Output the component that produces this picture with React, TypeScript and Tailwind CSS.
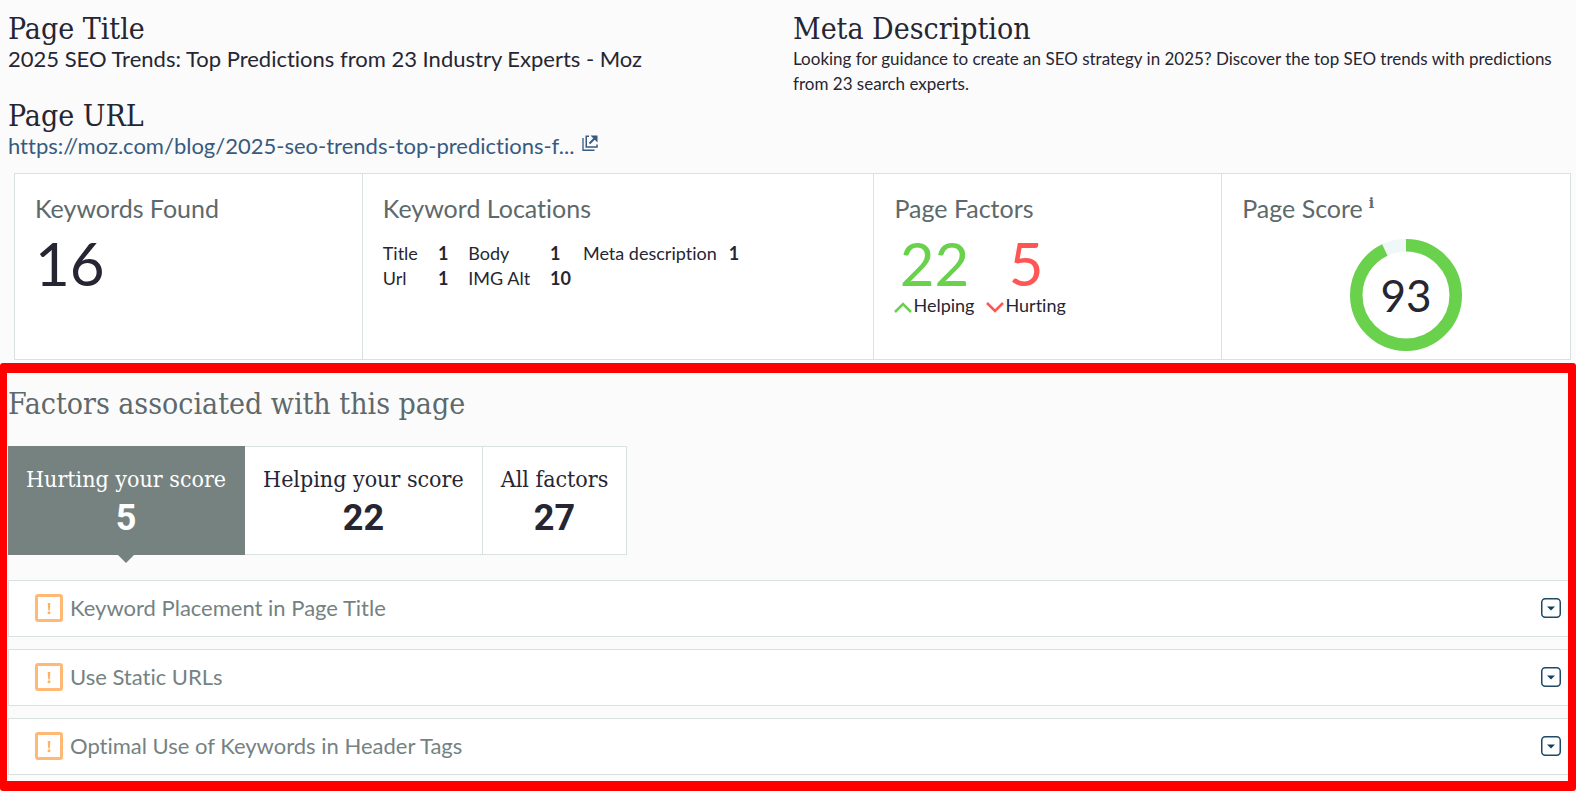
import { useState } from 'react';

const keywordLocations = [
  [
    { label: 'Title', count: 1 },
    { label: 'Body', count: 1 },
    { label: 'Meta description', count: 1 }
  ],
  [
    { label: 'Url', count: 1 },
    { label: 'IMG Alt', count: 10 }
  ]
];

const tabs = [
  { id: 'hurting', label: 'Hurting your score', count: 5 },
  { id: 'helping', label: 'Helping your score', count: 22 },
  { id: 'all', label: 'All factors', count: 27 }
];

const factors = [
  'Keyword Placement in Page Title',
  'Use Static URLs',
  'Optimal Use of Keywords in Header Tags'
];

function ExternalLinkIcon() {
  return (
    <svg width="16" height="16" viewBox="0 0 16 16" className="mb-1.5" fill="none" stroke="currentColor" aria-hidden="true">
      <path d="M1 3V15.250h11.500" strokeWidth="1.300" />
      <path d="M7 1.250H4.250V12H15V9.500" strokeWidth="1.500" />
      <path d="M7.500 8.500L13 3" strokeWidth="2" />
      <path d="M8.500 .5H15.500V7.500Z" fill="currentColor" stroke="none" />
    </svg>
  );
}

function Chevron({ up = false }: { up?: boolean }) {
  return (
    <svg
      width="18"
      height="12"
      viewBox="0 0 18 12"
      fill="none"
      stroke="currentColor"
      strokeWidth="2.500"
      className={up ? 'mt-1 mr-px text-[#69d14b]' : 'mt-1 mr-px text-[#ff5653]'}
      aria-hidden="true"
    >
      <path d={up ? 'M1 11L9 3L17 11' : 'M1 2L9 10L17 2'} />
    </svg>
  );
}

function WarningIcon() {
  return (
    <svg width="28" height="28" viewBox="0 0 28 28" className="shrink-0" aria-hidden="true">
      <rect x="1.500" y="1.500" width="25" height="25" rx="1.500" fill="none" stroke="#ffb975" strokeWidth="3" />
      <path d="M12.700 9h2.600l-.5 7.500h-1.600z" fill="#ffb160" />
      <circle cx="14" cy="18.700" r="1.500" fill="#ffb160" />
    </svg>
  );
}

function ToggleIcon() {
  return (
    <svg width="20" height="20" viewBox="0 0 20 20" className="block" aria-hidden="true">
      <rect x=".75" y=".75" width="18.500" height="18.500" rx="3.500" fill="none" stroke="#1f4a66" strokeWidth="1.500" />
      <path d="M6 8.500h8l-4 4z" fill="#0f4160" />
    </svg>
  );
}

function ScoreRing({ score }: { score: number }) {
  return (
    <div className="relative mx-auto size-28">
      <svg viewBox="0 0 112 112" className="size-28 -rotate-90" fill="none" strokeWidth="12.500" aria-hidden="true">
        <circle cx="56" cy="56" r="49.750" stroke="#eff7f7" />
        <circle cx="56" cy="56" r="49.750" stroke="#69d14b" pathLength="100" strokeDasharray={`${score} 100`} />
      </svg>
      <span className="absolute inset-0 flex items-center justify-center text-[44px] leading-none">{score}</span>
    </div>
  );
}

export default function App() {
  const [activeTab, setActiveTab] = useState('hurting');

  return (
    <div className="bg-[#fbfbfb] font-['Lato',sans-serif] text-[#262633] [font-variant-ligatures:none]">
      <header className="grid grid-cols-[785fr_775fr] px-2 pt-3.5">
        <div>
          <h2 className="font-['Roboto_Slab','DejaVu_Serif_Condensed','DejaVu_Serif',serif] text-[30px] leading-[30px] font-light">Page Title</h2>
          <p className="text-[22px] leading-[30px]">2025 SEO Trends: Top Predictions from 23 Industry Experts - Moz</p>
          <h2 className="mt-[27px] font-['Roboto_Slab','DejaVu_Serif_Condensed','DejaVu_Serif',serif] text-[30px] leading-[30px] font-light">Page URL</h2>
          <a href="#" className="flex items-center gap-2 text-[22px] leading-[30px] text-[#375a80]">
            https://moz.com/blog/2025-seo-trends-top-predictions-f...
            <ExternalLinkIcon />
          </a>
        </div>
        <div>
          <h2 className="font-['Roboto_Slab','DejaVu_Serif_Condensed','DejaVu_Serif',serif] text-[30px] leading-[30px] font-light">Meta Description</h2>
          <p className="pt-0.5 text-[17px] leading-[25px]">
            Looking for guidance to create an SEO strategy in 2025? Discover the top SEO trends with predictions from 23 search experts.
          </p>
        </div>
      </header>

      <div className="mt-3 mr-[5px] mb-[3px] ml-3.5 grid grid-cols-[348fr_512fr_348fr_348fr] divide-x divide-[#dae2e1] border border-[#dae2e1] bg-white">
        <div className="pt-[19px] pl-5">
          <h3 className="text-[25px] leading-[30px] text-[#5d696b]">Keywords Found</h3>
          <p className="mt-2.5 text-[60px] leading-[60px]">16</p>
        </div>

        <div className="pt-[19px] pl-5">
          <h3 className="text-[25px] leading-[30px] text-[#5d696b]">Keyword Locations</h3>
          <table className="mt-[18px] text-lg leading-[25px]">
            <tbody>
              {keywordLocations.map((row, i) => (
                <tr key={i}>
                  {row.map(({ label, count }, col) => [
                    <th key={label} scope="row" className={`text-left font-normal ${col === 2 ? 'pr-3' : 'pr-5'}`}>{label}</th>,
                    <td key={`${label}-count`} className={`font-bold ${col === 0 ? 'pr-5' : 'pr-3'}`}>{count}</td>
                  ])}
                </tr>
              ))}
            </tbody>
          </table>
        </div>

        <div className="pt-[19px] pl-5">
          <h3 className="text-[25px] leading-[30px] text-[#5d696b]">Page Factors</h3>
          <div className="mt-2.5 flex gap-3 text-center">
            <div>
              <p className="text-[60px] leading-[60px] text-[#69d14b]">22</p>
              <p className="flex items-center text-lg leading-6"><Chevron up />Helping</p>
            </div>
            <div>
              <p className="text-[60px] leading-[60px] text-[#ff5653]">5</p>
              <p className="flex items-center text-lg leading-6"><Chevron />Hurting</p>
            </div>
          </div>
        </div>

        <div className="pt-[19px] pb-2 pl-5">
          <h3 className="mb-4 flex gap-1.5 text-[25px] leading-[30px] text-[#5d696b]">
            Page Score
            <sup className="top-0 font-['DejaVu_Serif',serif] text-sm leading-5 font-bold">i</sup>
          </h3>
          <ScoreRing score={93} />
        </div>
      </div>

      <section className="overflow-hidden rounded-[3px] border-y-10 border-r-8 border-l-7 border-[#ff0000] pt-[13px] pb-1.5 pl-px">
        <h2 className="font-['Roboto_Slab','DejaVu_Serif_Condensed','DejaVu_Serif',serif] text-[30px] leading-9 font-light text-[#5d696b]">
          Factors associated with this page
        </h2>

        <div className="mt-6 flex">
          {tabs.map((tab) => {
            const active = tab.id === activeTab;
            return (
              <button
                key={tab.id}
                onClick={() => setActiveTab(tab.id)}
                className={`relative border-y border-r px-[18px] py-4 ${
                  active ? 'border-[#768280] bg-[#768280] text-white' : 'border-[#dae2e1] bg-white'
                }`}
              >
                <span className="block font-['Roboto_Slab','DejaVu_Serif_Condensed','DejaVu_Serif',serif] text-[23px] leading-8 font-light">{tab.label}</span>
                <span className="mt-1 block font-['Roboto_Slab','Roboto',sans-serif] text-4xl leading-[39px] font-bold">{tab.count}</span>
                {active && (
                  <svg width="18" height="9" viewBox="0 0 18 9" className="absolute top-full left-1/2 -ml-[9px]" aria-hidden="true">
                    <path d="M0 0H18L9 9Z" fill="#768280" />
                  </svg>
                )}
              </button>
            );
          })}
        </div>

        <ul className="mt-[25px] space-y-3">
          {factors.map((factor) => (
            <li key={factor} className="flex h-[57px] items-center border-y border-l border-[#dae2e1] bg-white pr-[7px] pb-0.5 pl-[26px]">
              <WarningIcon />
              <h3 className="ml-[7px] flex-1 text-[22px] leading-8 text-[#758282]">{factor}</h3>
              <button aria-label={`Expand ${factor}`}>
                <ToggleIcon />
              </button>
            </li>
          ))}
        </ul>
      </section>
    </div>
  );
}
